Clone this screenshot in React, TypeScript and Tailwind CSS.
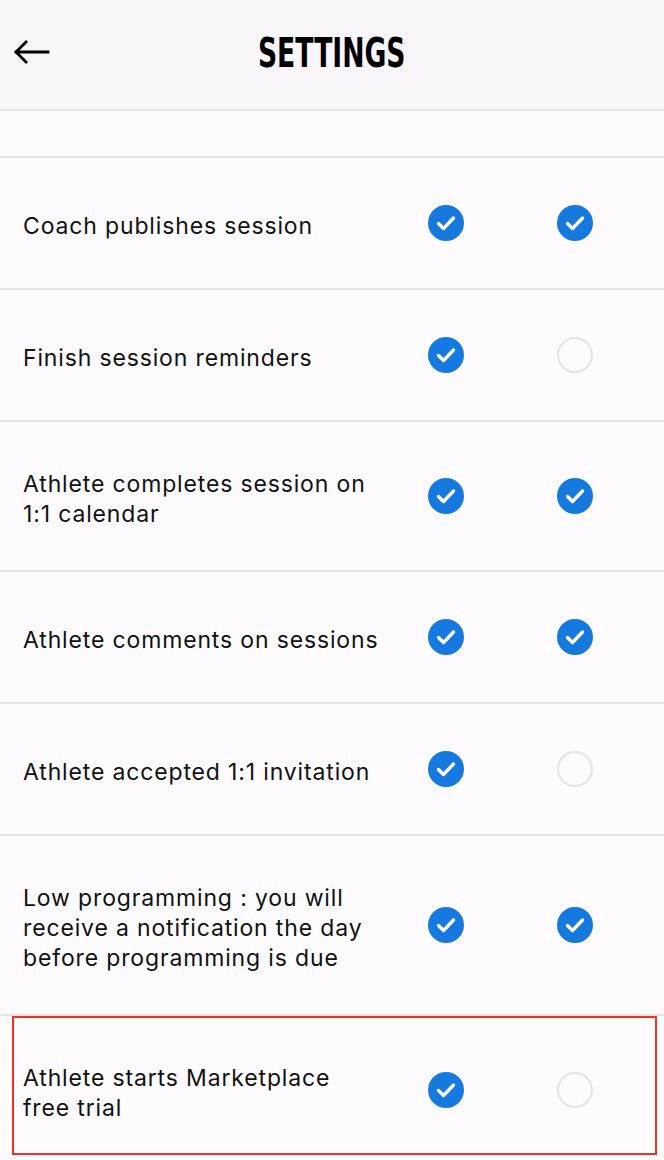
import React from "react";

type Row = { lines: string[]; push: boolean; email: boolean };

const rows: Row[] = [
  { lines: ["Coach publishes session"], push: true, email: true },
  { lines: ["Finish session reminders"], push: true, email: false },
  { lines: ["Athlete completes session on", "1:1 calendar"], push: true, email: true },
  { lines: ["Athlete comments on sessions"], push: true, email: true },
  { lines: ["Athlete accepted 1:1 invitation"], push: true, email: false },
  {
    lines: ["Low programming : you will", "receive a notification the day", "before programming is due"],
    push: true,
    email: true,
  },
];

function Check({ on }: { on: boolean }) {
  if (!on) {
    return <div className="w-[36px] h-[36px] rounded-full border-[2.5px] border-[#e6e2e7]" />;
  }
  return (
    <svg width="36" height="36" viewBox="0 0 36 36">
      <circle cx="18" cy="18" r="18" fill="#1679e0" />
      <path
        d="M10.5 18.5 L15.5 23.5 L25.5 13"
        fill="none"
        stroke="#fff"
        strokeWidth="3.4"
        strokeLinecap="round"
        strokeLinejoin="round"
      />
    </svg>
  );
}

function SettingRow({ row, last }: { row: Row; last?: boolean }) {
  return (
    <div
      className={
        "relative flex items-center min-h-[132px] py-[44px] pl-[23px] " +
        (last ? "" : "border-b-[2px] border-[#e6e4e8]")
      }
    >
      <div className="w-[358px] pt-[3px] -mb-[3px] text-[23px] leading-[30px] tracking-[0.85px] text-[#111] whitespace-nowrap">
        {row.lines.map((l) => (
          <div key={l}>{l}</div>
        ))}
      </div>
      <div className="ml-[47px] flex items-center">
        <Check on={row.push} />
      </div>
      <div className="ml-[93px] flex items-center">
        <Check on={row.email} />
      </div>
      {last && (
        <div className="absolute top-0 left-[12px] right-[7px] h-[139px] border-[2px] border-[#f2321f]" />
      )}
    </div>
  );
}

export default function App() {
  return (
    <div
      className="w-[664px] h-[1160px] overflow-hidden bg-[#fdfbfe]"
      style={{ fontFamily: "Inter, 'Liberation Sans', sans-serif" }}
    >
      <div className="relative h-[111px] bg-[#f9f6fa] border-b-[2px] border-[#e6e4e8] flex items-center justify-center">
        <svg
          className="absolute left-[14px] top-[39px]"
          width="36"
          height="26"
          viewBox="0 0 36 26"
        >
          <path
            d="M12 3 L2 13 L12 23 M2 13 L34 13"
            fill="none"
            stroke="#000"
            strokeWidth="2.8"
            strokeLinecap="square"
          />
        </svg>
        <h1
          className="text-[40px] font-bold text-black -mt-[3px] scale-x-[0.74]"
          style={{ fontFamily: "'Liberation Sans Narrow', 'DejaVu Sans Condensed', sans-serif" }}
        >
          SETTINGS
        </h1>
      </div>
      <div className="h-[47px] border-b-[2px] border-[#e6e4e8]" />
      {rows.map((r) => (
        <SettingRow key={r.lines[0]} row={r} />
      ))}
      <SettingRow row={{ lines: ["Athlete starts Marketplace", "free trial"], push: true, email: false }} last />
    </div>
  );
}
